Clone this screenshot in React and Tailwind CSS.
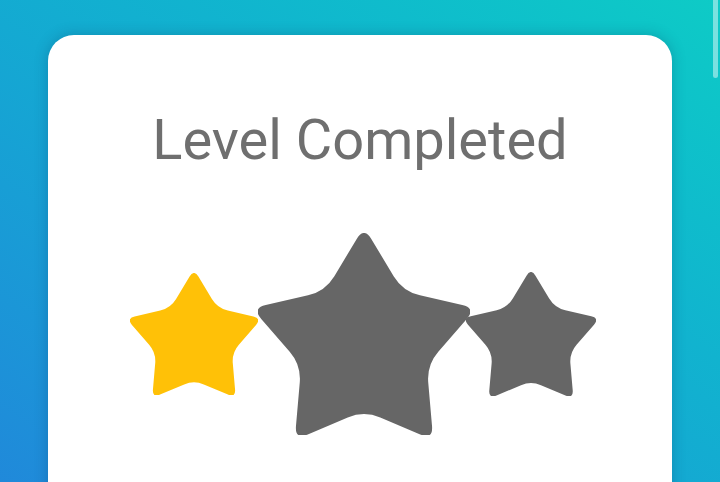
import React from 'react';

// rounded five-point star, R = 1, corners cut and curved
function starPath(inner = 0.56, cutOuter = 0.12, cutInner = 0.15) {
  const pts = [];
  for (let i = 0; i < 10; i++) {
    const a = (i * Math.PI) / 5;
    const rad = i % 2 === 0 ? 1 : inner;
    pts.push([rad * Math.sin(a), -rad * Math.cos(a)]);
  }
  const toward = (p, q, d) => {
    const dx = q[0] - p[0];
    const dy = q[1] - p[1];
    const len = Math.hypot(dx, dy);
    return [p[0] + (dx / len) * d, p[1] + (dy / len) * d];
  };
  const f = (n) => n.toFixed(4);
  let d = '';
  pts.forEach((p, i) => {
    const prev = pts[(i + 9) % 10];
    const next = pts[(i + 1) % 10];
    const c = i % 2 === 0 ? cutOuter : cutInner;
    const a = toward(p, prev, c);
    const b = toward(p, next, c);
    d += `${i === 0 ? 'M' : 'L'}${f(a[0])} ${f(a[1])} Q${f(p[0])} ${f(p[1])} ${f(b[0])} ${f(b[1])} `;
  });
  return d + 'Z';
}

const STAR = starPath();

function Star({ size, color, className = '' }) {
  return (
    <svg
      viewBox="-0.9 -0.948 1.8 1.715"
      width={size}
      height={size * (1.715 / 1.8)}
      className={className}
    >
      <path d={STAR} fill={color} />
    </svg>
  );
}

export default function App() {
  return (
    <div className="relative h-[482px] w-full overflow-hidden bg-linear-to-tr from-[#2089da] to-[#0ecbc6] px-[48px] pt-[35px]">
      <div className="flex h-[600px] flex-col items-center rounded-[26px] bg-white shadow-[0_0_14px_rgba(0,40,80,0.25)]">
        <h1
          className="mt-[77px] text-[56px] leading-[56px] text-[#6f6f6f]"
          style={{ fontFamily: 'Roboto, "Noto Sans", sans-serif' }}
        >
          Level Completed
        </h1>

        <div className="mt-[65px] flex w-full items-center justify-center pl-[6px]">
          <Star size={128} color="#ffc107" />
          <Star size={212} color="#666666" />
          <Star size={130} color="#666666" className="-ml-[4px]" />
        </div>
      </div>

      {/* scrollbar thumb */}
      <div className="absolute right-[2px] top-0 h-[78px] w-[5px] rounded-b-full bg-white/45" />
    </div>
  );
}
